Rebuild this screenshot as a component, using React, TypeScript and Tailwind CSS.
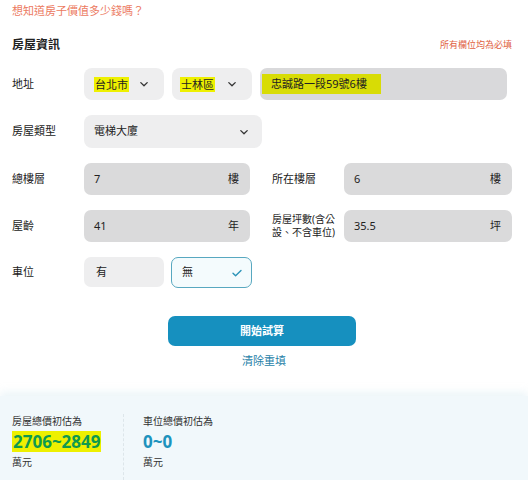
import React from "react";

const font = {
  fontFamily: '"Noto Sans", "Noto Sans CJK TC", sans-serif',
};

function Chevron() {
  return (
    <svg width="12" height="12" viewBox="0 0 12 12" fill="none">
      <path d="M2.8 4.6L6 7.8l3.2-3.2" stroke="#333" strokeWidth="1.3" strokeLinecap="round" strokeLinejoin="round" />
    </svg>
  );
}

function Check() {
  return (
    <svg width="12" height="12" viewBox="0 0 12 12" fill="none">
      <path d="M2 6.3l2.6 2.5L10 3.5" stroke="#2b93b8" strokeWidth="1.4" strokeLinecap="round" strokeLinejoin="round" />
    </svg>
  );
}

function Label({ children }: { children: React.ReactNode }) {
  return <div className="w-[72px] shrink-0 text-[11px] text-[#222]">{children}</div>;
}

function Unit({ value, unit, w }: { value: string; unit: string; w: string }) {
  return (
    <div className={`${w} h-[32px] rounded-[7px] bg-[#dadadb] flex items-center justify-between pl-[10px] pr-[11px] text-[11px] text-[#222]`}>
      <span>{value}</span>
      <span>{unit}</span>
    </div>
  );
}

export default function App() {
  return (
    <div className="w-[528px] h-[480px] bg-white overflow-hidden flex flex-col" style={font}>
      <div className="px-[12px] pt-[3px] text-[11px] text-[#ec7a5f] leading-[16px]">想知道房子價值多少錢嗎？</div>

      <div className="pl-[12px] pr-[16px] mt-[17px] flex items-center justify-between">
        <div className="text-[12px] font-bold text-[#222]">房屋資訊</div>
        <div className="text-[9px] text-[#e0603f]">所有欄位均為必填</div>
      </div>

      <div className="pl-[12px] flex flex-col">
        {/* address */}
        <div className="mt-[14px] flex items-center">
          <Label>地址</Label>
          <div className="flex gap-[8px]">
            <div className="w-[80px] h-[32px] rounded-[8px] bg-[#eeeeef] flex items-center justify-between pl-[10px] pr-[14px] text-[11px] text-[#222]">
              <span className="bg-[#eef000] px-[1px] leading-[15px]">台北市</span>
              <Chevron />
            </div>
            <div className="w-[80px] h-[32px] rounded-[8px] bg-[#eeeeef] flex items-center justify-between pl-[8px] pr-[14px] text-[11px] text-[#222]">
              <span className="bg-[#eef000] px-[1px] leading-[15px]">士林區</span>
              <Chevron />
            </div>
            <div className="w-[247px] h-[32px] rounded-[7px] bg-[#d9d9db] flex items-center pl-[2px] text-[11px] text-[#222]">
              <span className="bg-[#d8dc05] pl-[9px] pr-[14px] leading-[20px]">忠誠路一段59號6樓</span>
            </div>
          </div>
        </div>

        {/* type */}
        <div className="mt-[15px] flex items-center">
          <Label>房屋類型</Label>
          <div className="w-[178px] h-[33px] rounded-[8px] bg-[#eeeeef] flex items-center justify-between pl-[10px] pr-[12px] text-[11px] text-[#222]">
            <span>電梯大廈</span>
            <Chevron />
          </div>
        </div>

        {/* floors */}
        <div className="mt-[15px] flex items-center">
          <Label>總樓層</Label>
          <Unit value="7" unit="樓" w="w-[166px]" />
          <div className="ml-[22px] w-[72px] text-[11px] text-[#222]">所在樓層</div>
          <Unit value="6" unit="樓" w="w-[168px]" />
        </div>

        {/* age / size */}
        <div className="mt-[15px] flex items-center">
          <Label>屋齡</Label>
          <Unit value="41" unit="年" w="w-[166px]" />
          <div className="ml-[22px] w-[72px] text-[10px] leading-[13px] text-[#222]">
            房屋坪數(含公
            <br />
            設、不含車位)
          </div>
          <Unit value="35.5" unit="坪" w="w-[168px]" />
        </div>

        {/* parking */}
        <div className="mt-[15px] flex items-center">
          <Label>車位</Label>
          <div className="flex gap-[7px]">
            <div className="w-[80px] h-[30px] rounded-[7px] bg-[#eeeeef] flex items-center pl-[12px] text-[11px] text-[#222]">有</div>
            <div className="w-[81px] h-[31px] rounded-[7px] bg-[#f4fbfd] border border-[#58a8c0] flex items-center justify-between pl-[10px] pr-[8px] text-[11px] text-[#222]">
              <span>無</span>
              <Check />
            </div>
          </div>
        </div>
      </div>

      <div className="mt-[28px] flex flex-col items-center">
        <div className="w-[188px] h-[30px] rounded-[7px] bg-[#1690bf] flex items-center justify-center text-[11px] font-bold text-white -translate-x-[2px]">開始試算</div>
        <div className="mt-[7px] text-[11px] text-[#1f7fa8]">清除重填</div>
      </div>

      <div className="mt-auto h-[84px] bg-[#f1f8fb] shadow-[0_-4px_8px_rgba(200,225,235,0.35)] flex pl-[12px] pt-[18px]">
        <div className="w-[112px] border-r border-dashed border-[#dde6ea] flex flex-col">
          <div className="text-[10px] text-[#333] leading-[14px]">房屋總價初估為</div>
          <div className="mt-[3px] self-start bg-[#eef000] px-[1px] text-[17px] font-bold leading-[21px] text-[#0f9a4e]" style={{ fontFamily: '"Open Sans", sans-serif' }}>2706~2849</div>
          <div className="mt-[3px] text-[10px] text-[#333] leading-[14px]">萬元</div>
        </div>
        <div className="pl-[19px] flex flex-col">
          <div className="text-[10px] text-[#333] leading-[14px]">車位總價初估為</div>
          <div className="mt-[3px] text-[17px] font-bold leading-[21px] text-[#1d93bd]" style={{ fontFamily: '"Open Sans", sans-serif' }}>0~0</div>
          <div className="mt-[3px] text-[10px] text-[#333] leading-[14px]">萬元</div>
        </div>
      </div>
    </div>
  );
}
